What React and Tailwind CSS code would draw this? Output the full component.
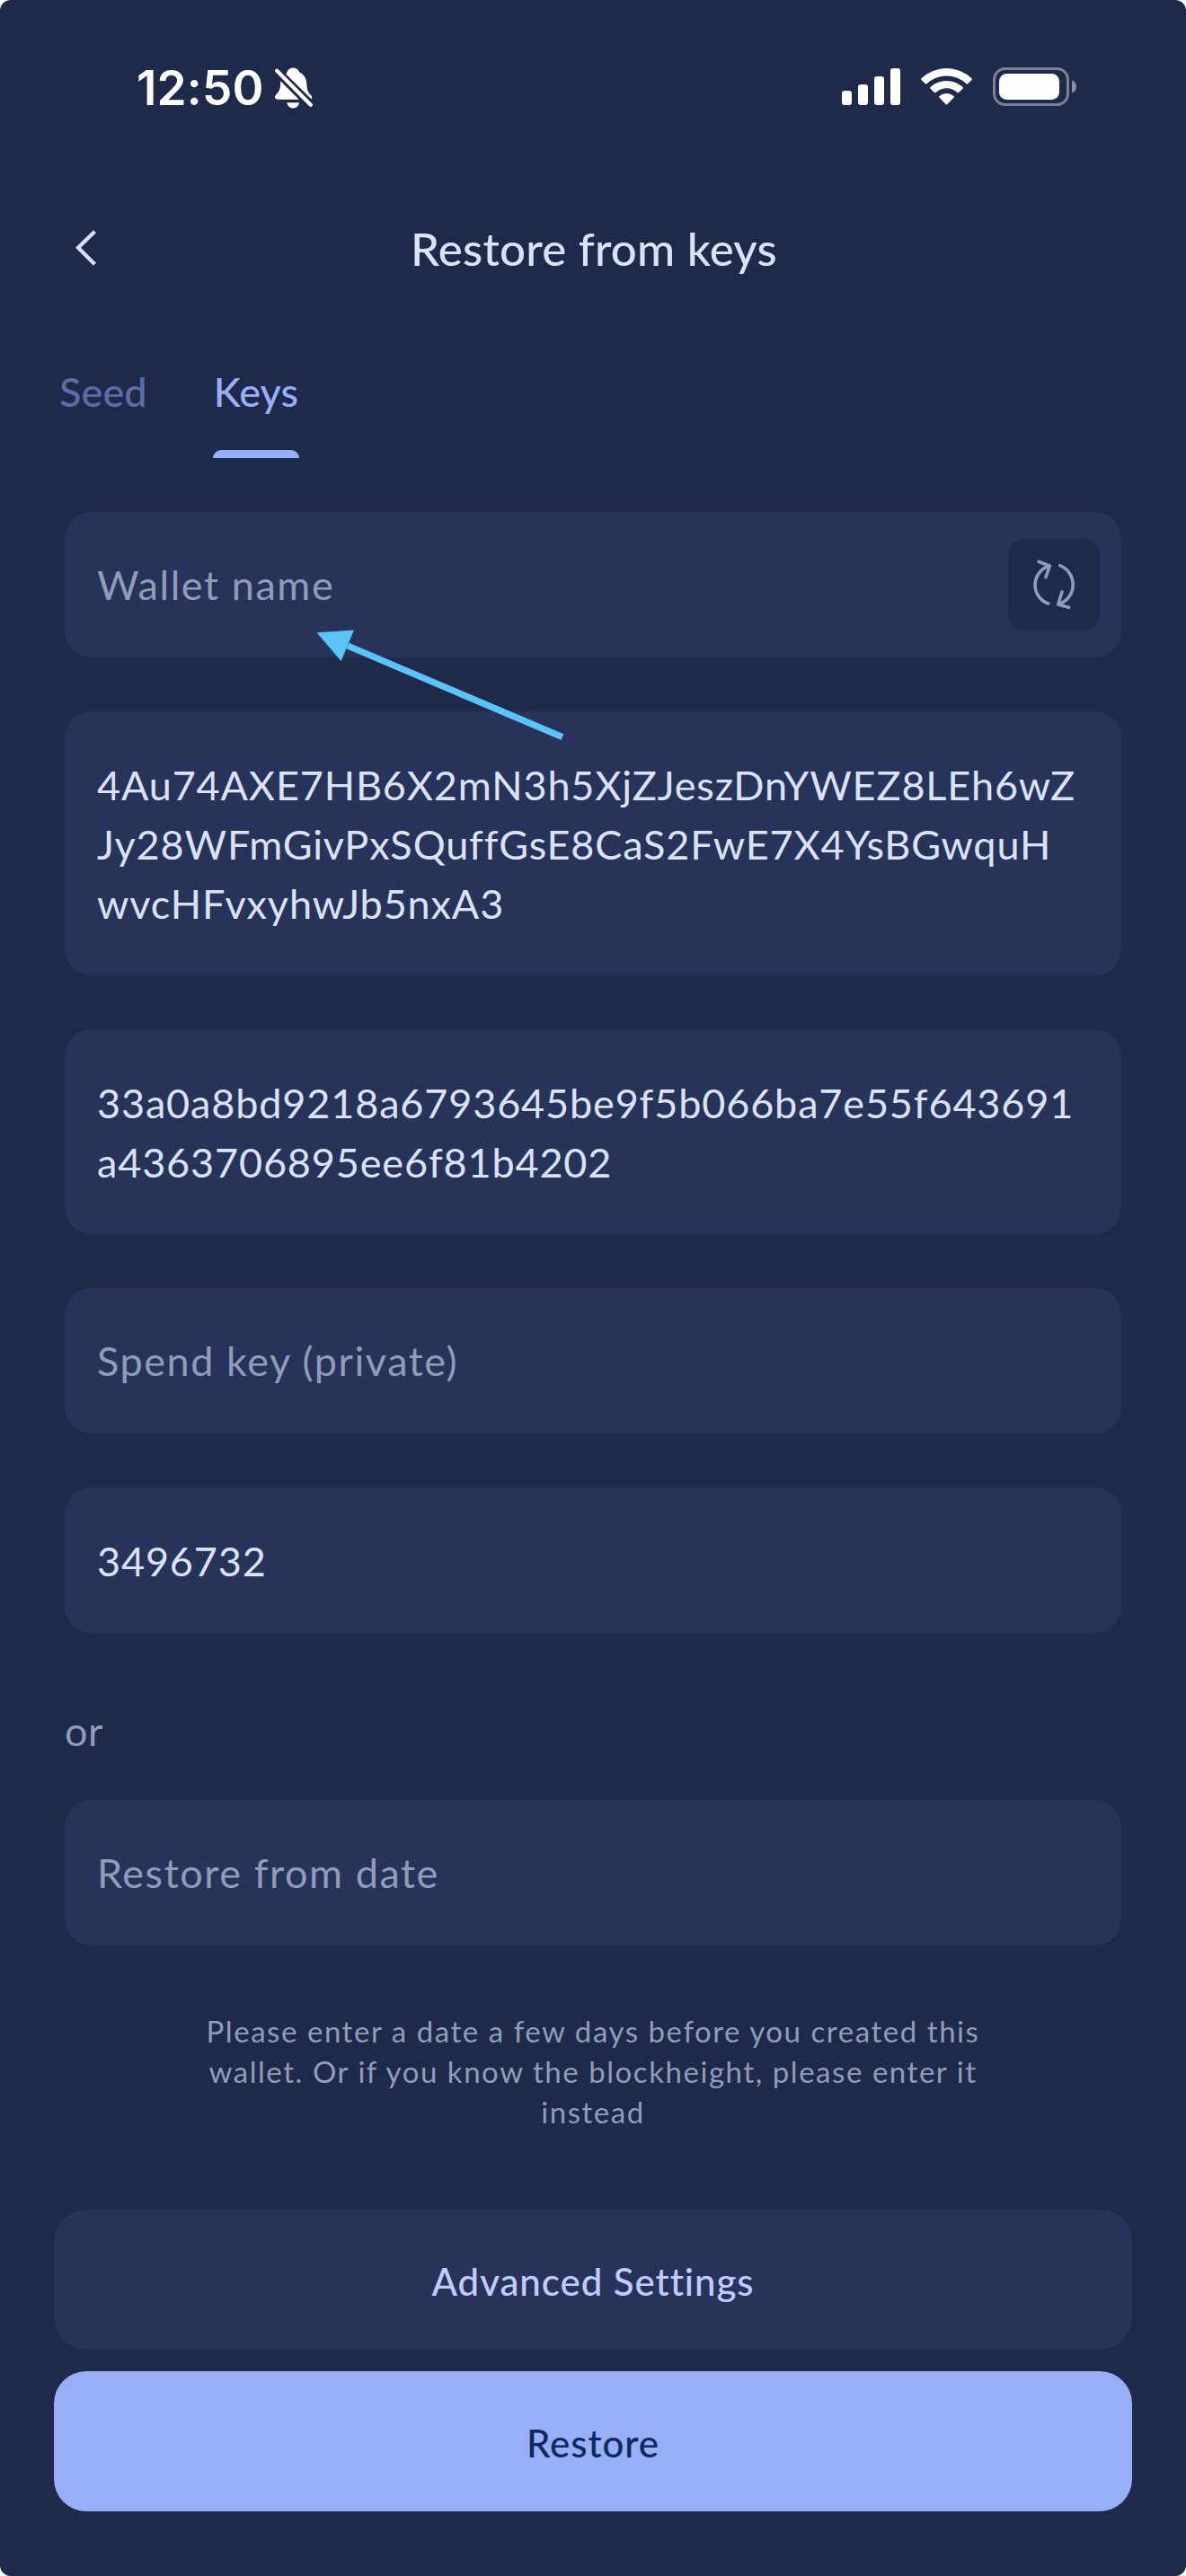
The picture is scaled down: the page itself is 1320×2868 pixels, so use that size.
import React from "react";

function StatusBar() {
  return (
    <div className="flex h-[198px] items-start justify-between pl-[152px] pr-[121px] text-white">
      <div className="flex items-start">
        <span className="mt-[66px] h-[64px] w-[154px] whitespace-nowrap font-['Inter',sans-serif] text-[53px] font-semibold leading-[64px] tracking-[0.2px]">12:50</span>
        <svg className="mt-[74px] h-[48px] w-[44px]" viewBox="0 0 44 48" fill="currentColor">
          <path d="M13.500 6.200C14.800 3 17.200 1.500 20.200 1.500c3.200 0 5.700 1.500 6.900 4.700 5 2.300 7.900 7 8.200 12.500.3 6 .8 9.600 5.200 13.700 1 1 .9 3.200-.1 3.800L12.300 8.400z" />
          <path d="M6.300 16.200L26.700 36.800H3.500C-.8 36.800-.6 33 1.200 31.400 4.500 28.400 6.100 25 6.100 20z" />
          <path d="M13.300 40.300H27c-.5 3.700-3.300 6.200-6.800 6.200s-6.300-2.500-6.900-6.200z" />
          <path d="M2.200 4.800L39.800 42.800" fill="none" stroke="currentColor" strokeWidth="4.200" strokeLinecap="round" />
        </svg>
      </div>
      <div className="mt-[75px] flex items-start">
        <div className="flex h-[42px] items-end gap-[7px]">
          <div className="h-[16px] w-[11px] rounded-[3px] bg-white" />
          <div className="h-[23px] w-[11px] rounded-[3px] bg-white" />
          <div className="h-[32px] w-[11px] rounded-[3px] bg-white" />
          <div className="h-[41px] w-[11px] rounded-[3px] bg-white" />
        </div>
        <svg className="ml-[22px] h-[43px] w-[60px]" viewBox="0 0 60 43" fill="currentColor">
          <path d="M1.500 12.200a40.500 40.500 0 0 1 56 0q.9.900 0 1.800l-4.400 4.200q-.8.700-1.600 0a32 32 0 0 0-44 0q-.8.700-1.600 0L1.500 14q-.9-.9 0-1.800z" />
          <path d="M11.500 22a26.500 26.500 0 0 1 36 0q.8.900 0 1.700l-4.400 4.300q-.8.700-1.600 0a17.500 17.500 0 0 0-24 0q-.8.700-1.600 0L11.500 23.700q-.8-.8 0-1.700z" />
          <path d="M21.400 31.900a13 13 0 0 1 16.200 0q.9.900 0 1.700l-7.200 7.500q-.9.900-1.800 0l-7.200-7.500q-.9-.8 0-1.700z" />
        </svg>
        <svg className="ml-[21px] h-[43px] w-[94px]" viewBox="0 0 94 43">
          <rect x="1.500" y="1.500" width="82" height="40" rx="12" fill="none" stroke="#7b8295" strokeWidth="3" />
          <rect x="7" y="7" width="67" height="29" rx="8.500" fill="white" />
          <path d="M88 14.500c3 1 5 3.500 5 7s-2 6-5 7z" fill="#8b91a2" />
        </svg>
      </div>
    </div>
  );
}

function Header() {
  return (
    <div className="grid h-[156px] grid-cols-[240px_1fr_240px] items-center">
      <svg className="ml-[82px] h-[44px] w-[30px]" viewBox="0 0 30 44" fill="none" stroke="#d8e1f7" strokeWidth="4.300">
        <path d="M23.500 3.800L5 21.800 23.500 40.200" />
      </svg>
      <h1 className="mt-px pl-[2px] text-center text-[51px] font-medium leading-[60px] tracking-[0.25px] text-[#d9e2f7]">Restore from keys</h1>
    </div>
  );
}

function Tabs() {
  return (
    <div className="flex h-[156px] gap-[73px] px-[66px] pt-[49px] text-[45px] font-medium leading-[66px] tracking-[0.1px]">
      <div className="w-[98px] text-[#5b6ca6]">Seed</div>
      <div className="flex h-[107px] w-[96px] flex-col justify-between text-[#98aef8]">
        <span className="text-center">Keys</span>
        <div className="h-[9px] rounded-t-[9px] bg-[#98aef8]" />
      </div>
    </div>
  );
}

function RefreshButton() {
  return (
    <button className="flex h-[102px] w-[102px] items-center justify-center rounded-[18px] bg-[#1f2949]">
      <svg className="h-[60px] w-[54px]" viewBox="0 0 54 60" fill="none" stroke="#8f9dba" strokeWidth="3.600" strokeLinecap="round" strokeLinejoin="round">
        <path d="M20.700 51A22 22 0 0 1 22.300 9M10 4.300L22.300 9 18 21.700" />
        <path d="M33.700 8.700A22.900 22.900 0 0 1 31.700 52M36 38L31.700 52 43.700 55.300" />
      </svg>
    </button>
  );
}

function Field({ lines, filled, children }) {
  return (
    <div className={"flex items-center justify-between rounded-[30px] bg-[#283359] pl-9 pr-6 " + (filled ? "pb-[47px] pt-[49px]" : "py-12")}>
      <div className={filled ? "tracking-[0.85px] text-[#d9e2f7]" : "tracking-[1.55px] text-[#8f9dba]"}>
        {lines.map((line) => (
          <div key={line} className="whitespace-nowrap text-[45px] leading-[66px]">{line}</div>
        ))}
      </div>
      {children && <div className="-my-[18px]">{children}</div>}
    </div>
  );
}

function Arrow() {
  return (
    <svg className="pointer-events-none absolute left-[340px] top-[690px] h-[150px] w-[300px]" viewBox="340 690 300 150">
      <path d="M387 719L626 820.700" stroke="#5ac3f8" strokeWidth="7.300" />
      <path d="M352.500 704.300L394 701.600 379.600 736z" fill="#5ac3f8" />
    </svg>
  );
}

export default function App() {
  return (
    <div className="h-[2868px] w-[1320px] bg-white">
      <div className="relative flex h-full flex-col overflow-hidden rounded-[12px] bg-[#1f2949] font-['Lato',sans-serif]">
        <StatusBar />
        <Header />
        <Tabs />
        <div className="mx-[72px] mt-[60px] flex flex-col gap-[60px]">
          <Field lines={["Wallet name"]}>
            <RefreshButton />
          </Field>
          <Field
            filled
            lines={[
              "4Au74AXE7HB6X2mN3h5XjZJeszDnYWEZ8LEh6wZ",
              "Jy28WFmGivPxSQuffGsE8CaS2FwE7X4YsBGwquH",
              "wvcHFvxyhwJb5nxA3",
            ]}
          />
          <Field
            filled
            lines={["33a0a8bd9218a6793645be9f5b066ba7e55f643691", "a4363706895ee6f81b4202"]}
          />
          <Field lines={["Spend key (private)"]} />
          <Field filled lines={["3496732"]} />
        </div>
        <div className="mx-[72px] mt-[76px] text-[45px] leading-[66px] tracking-[0.5px] text-[#8f9dba]">or</div>
        <div className="mx-[72px] mt-[44px]">
          <Field lines={["Restore from date"]} />
        </div>
        <p className="mt-[73px] text-center text-[33px] leading-[45px] tracking-[1.55px] text-[#8f9dba]">
          Please enter a date a few days before you created this<br />
          wallet. Or if you know the blockheight, please enter it<br />
          instead
        </p>
        <div className="mx-[60px] mb-[72px] mt-auto flex flex-col gap-6 text-[42px] font-medium tracking-[0.95px]">
          <button className="h-[156px] rounded-[36px] bg-[#283359] pt-1 text-[#c0ccff]">Advanced Settings</button>
          <button className="h-[156px] rounded-[36px] bg-[#98aef8] pt-1 text-[#0c2a5f]">Restore</button>
        </div>
        <Arrow />
      </div>
    </div>
  );
}
